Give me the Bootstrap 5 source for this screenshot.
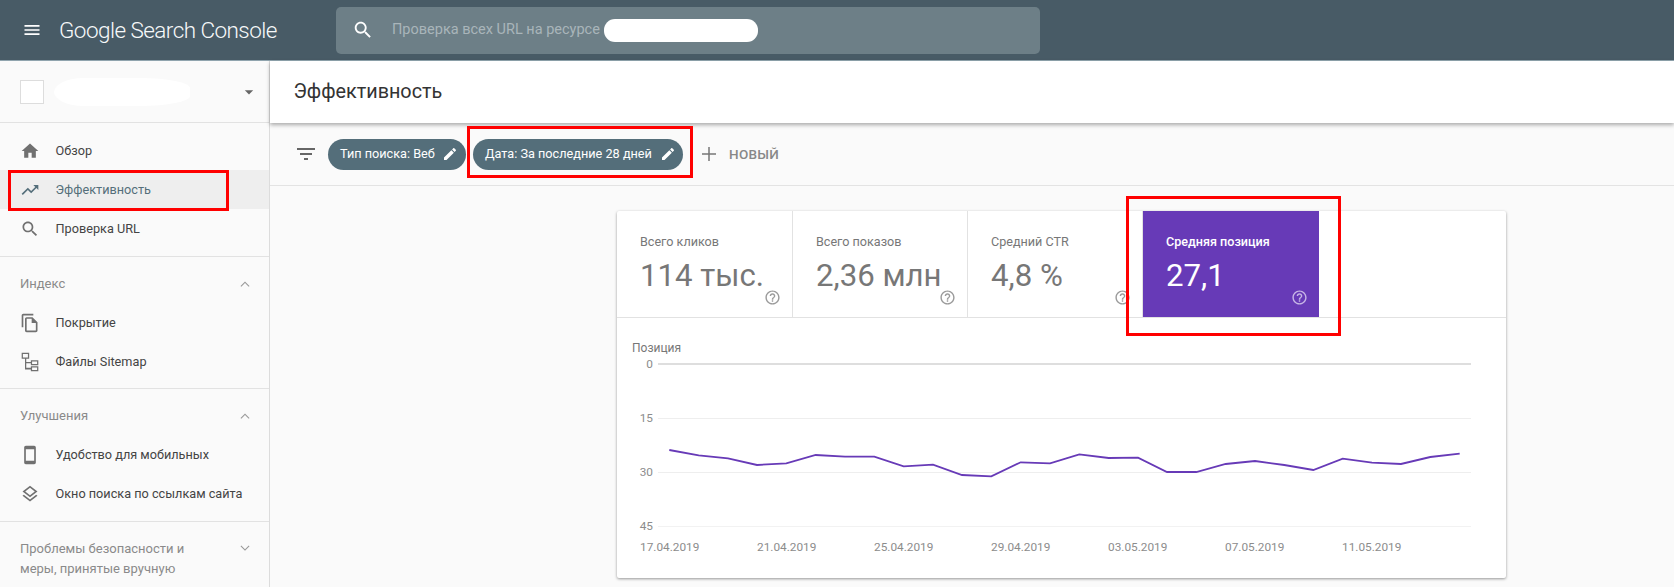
<!DOCTYPE html>
<html lang="ru">
<head>
<meta charset="utf-8">
<title>Google Search Console</title>
<link href="https://cdn.jsdelivr.net/npm/bootstrap@5.3.0/dist/css/bootstrap.min.css" rel="stylesheet">
<style>
html,body{height:587px;overflow:hidden;background:#fafafa;font-family:Roboto,"Liberation Sans",sans-serif;color:#444}
.gsc-root{position:relative;width:1674px;height:587px;overflow:hidden}
.gsc-top{height:61px;background:#485b66;border-bottom:1px solid #90a4ae;padding:0}
.gsc-burger{width:20px;height:20px;fill:#fff;margin-left:22px;flex:none}
.gsc-logo{font-size:22.5px;font-weight:300;color:#f7f9fa;letter-spacing:-.55px;margin-left:17px;width:277px;flex:none;line-height:1}
.gsc-search{width:704px;height:47px;background:#6d7f87;border-radius:5px;padding-left:16px;flex:none}
.gsc-search svg{width:22px;height:22px;fill:#fff;flex:none}
.gsc-search span{font-size:14.5px;color:#a9b5ba;margin-left:18px;width:212px;white-space:nowrap;flex:none}
.gsc-blot{width:154px;height:23px;background:#fff;border-radius:11px;flex:none}
.gsc-side{width:270px;height:526px;background:#fafafa;border-right:1px solid #dcdcdc;flex:none;overflow:hidden}
.gsc-prop{height:62px;border-bottom:1px solid #e2e2e2;padding-left:20px;padding-right:10px}
.gsc-square{width:24px;height:24px;background:#fff;border:1px solid #ddd;flex:none}
.gsc-prop-blot{width:136px;height:28px;background:#fff;border-radius:30px 50px 50px 30px/14px 10px 10px 14px;margin-left:10px;flex:none}
.gsc-drop{width:20px;height:20px;fill:#666;margin-left:auto;flex:none}
.gsc-group{padding-bottom:8px;border-bottom:1px solid #e2e2e2}
.gsc-group.gsc-first{padding-top:8px}
.gsc-group.gsc-tight{padding-bottom:7px}
.gsc-item{height:39px;color:#444;font-size:12.700px;font-weight:400;padding:0 0 0 20px;text-decoration:none;white-space:nowrap}
.gsc-item svg{width:20px;height:20px;fill:#707070;flex:none;margin-right:15.500px}
.gsc-item.gsc-on{background:#eee;color:#546e7a}
.gsc-item.gsc-on svg{fill:#546e7a}
.gsc-head{padding:18px 14px 10px 20px;font-size:13px;line-height:18px;color:#8a8a8a}
.gsc-head svg{width:18px;height:18px;fill:#999;flex:none;margin-right:1px}
.gsc-head.gsc-two{padding-top:17px;line-height:20px;align-items:flex-start!important}
.gsc-main{width:1404px;flex:none}
.gsc-title{height:62px;background:#fff;box-shadow:0 2px 4px rgba(0,0,0,.32);padding-left:23.500px;font-size:19.800px;font-weight:400;color:#333;position:relative}
.gsc-filters{height:63px;border-bottom:1px solid #e3e3e3;padding-left:24px}
.gsc-filter-ico{width:24px;height:24px;fill:#666;margin-right:10px;flex:none}
.gsc-chip{height:31px;border-radius:16px;background:#546e7a;color:#fff;font-size:12.700px;font-weight:400;padding:0 8px 0 12px;white-space:nowrap;flex:none;justify-content:space-between}
.gsc-chip svg{width:16px;height:16px;fill:#fff;flex:none}
.gsc-chip-a{width:138px;margin-right:7px}
.gsc-chip-b{width:210px;margin-right:14px;padding-right:7px}
.gsc-add{width:24px;height:24px;fill:#777;flex:none;margin-right:8px}
.gsc-new{font-size:13.500px;font-weight:500;color:#888;letter-spacing:.3px}
.gsc-card{width:889px;height:367px;background:#fff;margin:25px 0 0 347px;box-shadow:0 1px 3px rgba(0,0,0,.4);border-radius:2px}
.gsc-tiles{height:107px;border-bottom:1px solid #e2e2e2}
.gsc-tile{width:175px;height:106px;padding:22px 0 0 23px;border-right:1px solid #e2e2e2;position:relative;color:#777;flex:none}
.gsc-tile.gsc-wide{width:176px}
.gsc-tile.gsc-sel{background:#673ab7;color:#fff;border:0;width:176px}
.gsc-label{font-size:12.600px;line-height:18px;white-space:nowrap}
.gsc-sel .gsc-label{font-weight:500}
.gsc-value{font-size:31.200px;line-height:40px;margin-top:5px;white-space:nowrap}
.gsc-help{position:absolute;width:17px;height:17px;fill:#9a9a9a;right:11px;bottom:11px}
.gsc-sel .gsc-help{fill:#c8b6e6}
.gsc-chart{display:block}
.gsc-ax{font-family:Roboto,"Liberation Sans",sans-serif;font-size:11.800px;fill:#8c8c8c}
.gsc-cap{font-family:Roboto,"Liberation Sans",sans-serif;font-size:12px;fill:#777}
.gsc-mark{position:absolute;border:3px solid #f00;pointer-events:none}
.gsc-mark-a{left:8px;top:170px;width:221px;height:41px}
.gsc-mark-b{left:467px;top:126px;width:226px;height:52px}
.gsc-mark-c{left:1126px;top:196px;width:215px;height:140px}
</style>
</head>
<body>
<svg width="0" height="0" class="d-block position-absolute">
<defs>
<symbol id="i-menu" viewBox="0 0 24 24"><path d="M3 18h18v-2H3v2zm0-5h18v-2H3v2zm0-7v2h18V6H3z"/></symbol>
<symbol id="i-search" viewBox="0 0 24 24"><path d="M15.5 14h-.79l-.28-.27C15.41 12.59 16 11.11 16 9.5 16 5.91 13.09 3 9.5 3S3 5.91 3 9.5 5.91 16 9.5 16c1.61 0 3.09-.59 4.23-1.57l.27.28v.79l5 4.99L20.49 19l-4.99-5zm-6 0C7.01 14 5 11.99 5 9.5S7.01 5 9.5 5 14 7.01 14 9.5 11.99 14 9.5 14z"/></symbol>
<symbol id="i-home" viewBox="0 0 24 24"><path d="M10 20v-6h4v6h5v-8h3L12 3 2 12h3v8z"/></symbol>
<symbol id="i-trend" viewBox="0 0 24 24"><path d="M16 6l2.29 2.29-4.88 4.88-4-4L2 16.59 3.41 18l6-6 4 4 6.3-6.29L22 12V6z"/></symbol>
<symbol id="i-filter" viewBox="0 0 24 24"><path d="M10 18h4v-2h-4v2zM3 6v2h18V6H3zm3 7h12v-2H6v2z"/></symbol>
<symbol id="i-edit" viewBox="0 0 24 24"><path d="M3 17.25V21h3.75L17.81 9.94l-3.75-3.75L3 17.25zM20.71 7.04c.39-.39.39-1.02 0-1.41l-2.34-2.34c-.39-.39-1.02-.39-1.41 0l-1.83 1.83 3.75 3.75 1.83-1.83z"/></symbol>
<symbol id="i-add" viewBox="0 0 24 24"><path d="M19 12.75h-6.25V19h-1.5v-6.25H5v-1.5h6.25V5h1.5v6.25H19z"/></symbol>
<symbol id="i-less" viewBox="0 0 24 24"><path d="M12 8.5l-6 6 1 1 5-5 5 5 1-1z"/></symbol>
<symbol id="i-more" viewBox="0 0 24 24"><path d="M17 8.5l-5 5-5-5-1 1 6 6 6-6z"/></symbol>
<symbol id="i-drop" viewBox="0 0 24 24"><path d="M7 10l5 5 5-5z"/></symbol>
<symbol id="i-copy" viewBox="0 0 24 24"><path d="M16 1H4c-1.1 0-2 .9-2 2v14h2V3h12V1zm-1 4H8c-1.1 0-1.99.9-1.99 2L6 21c0 1.1.89 2 1.99 2H19c1.1 0 2-.9 2-2V11l-6-6zM8 21V7h6v5h5v9H8z"/></symbol>
<symbol id="i-map" viewBox="0 0 24 24"><path d="M2 1h9v7H7.5v4H13v-2h9v6h-9v-2.500H7.500v5.500H13v-2h9v6h-9v-2H6V8H2V1zm1.500 1.500v4h6v-4h-6zM14.500 11.500v3h6v-3h-6zm0 7v3h6v-3h-6z"/></symbol>
<symbol id="i-phone" viewBox="0 0 24 24"><path d="M17 1.010L7 1c-1.100 0-2 .9-2 2v18c0 1.100.9 2 2 2h10c1.100 0 2-.9 2-2V3c0-1.100-.9-1.990-2-1.990zM17 19H7V5h10v14z"/></symbol>
<symbol id="i-layers" viewBox="0 0 24 24"><path d="M11.990 18.540l-7.370-5.730L3 14.070l9 7 9-7-1.630-1.270-7.380 5.740zM12 16l7.360-5.730L21 9l-9-7-9 7 1.630 1.270L12 16zm0-11.470L17.740 9 12 13.470 6.260 9 12 4.530z"/></symbol>
<symbol id="i-help" viewBox="0 0 24 24"><path d="M11 18h2v-2h-2v2zm1-16C6.480 2 2 6.480 2 12s4.480 10 10 10 10-4.480 10-10S17.520 2 12 2zm0 18c-4.410 0-8-3.590-8-8s3.590-8 8-8 8 3.590 8 8-3.590 8-8 8zm0-14c-2.210 0-4 1.790-4 4h2c0-1.100.9-2 2-2s2 .9 2 2c0 2-3 1.750-3 5h2c0-2.250 3-2.500 3-5 0-2.210-1.790-4-4-4z"/></symbol>
</defs>
</svg>
<div class="gsc-root">
  <header class="navbar gsc-top flex-nowrap justify-content-start align-items-center">
    <svg class="gsc-burger"><use href="#i-menu"/></svg>
    <span class="gsc-logo">Google Search Console</span>
    <div class="gsc-search d-flex align-items-center">
      <svg><use href="#i-search"/></svg>
      <span>Проверка всех URL на ресурсе</span>
      <div class="gsc-blot"></div>
    </div>
  </header>
  <div class="d-flex">
    <aside class="gsc-side">
      <div class="gsc-prop d-flex align-items-center">
        <div class="gsc-square"></div>
        <div class="gsc-prop-blot"></div>
        <svg class="gsc-drop"><use href="#i-drop"/></svg>
      </div>
      <nav class="gsc-group gsc-first nav flex-column">
        <a class="gsc-item d-flex align-items-center" href="#"><svg><use href="#i-home"/></svg>Обзор</a>
        <a class="gsc-item gsc-on d-flex align-items-center" href="#"><svg><use href="#i-trend"/></svg>Эффективность</a>
        <a class="gsc-item d-flex align-items-center" href="#"><svg><use href="#i-search"/></svg>Проверка URL</a>
      </nav>
      <nav class="gsc-group gsc-tight nav flex-column">
        <div class="gsc-head d-flex justify-content-between align-items-center">Индекс<svg><use href="#i-less"/></svg></div>
        <a class="gsc-item d-flex align-items-center" href="#"><svg><use href="#i-copy"/></svg>Покрытие</a>
        <a class="gsc-item d-flex align-items-center" href="#"><svg><use href="#i-map"/></svg>Файлы Sitemap</a>
      </nav>
      <nav class="gsc-group nav flex-column">
        <div class="gsc-head d-flex justify-content-between align-items-center">Улучшения<svg><use href="#i-less"/></svg></div>
        <a class="gsc-item d-flex align-items-center" href="#"><svg><use href="#i-phone"/></svg>Удобство для мобильных</a>
        <a class="gsc-item d-flex align-items-center" href="#"><svg><use href="#i-layers"/></svg>Окно поиска по ссылкам сайта</a>
      </nav>
      <div class="gsc-head gsc-two d-flex justify-content-between">Проблемы безопасности и<br>меры, принятые вручную<svg><use href="#i-more"/></svg></div>
    </aside>
    <main class="gsc-main">
      <div class="gsc-title d-flex align-items-center">Эффективность</div>
      <div class="gsc-filters d-flex align-items-center">
        <svg class="gsc-filter-ico"><use href="#i-filter"/></svg>
        <div class="gsc-chip gsc-chip-a d-flex align-items-center">Тип поиска: Веб<svg><use href="#i-edit"/></svg></div>
        <div class="gsc-chip gsc-chip-b d-flex align-items-center">Дата: За последние 28 дней<svg><use href="#i-edit"/></svg></div>
        <svg class="gsc-add"><use href="#i-add"/></svg>
        <span class="gsc-new">НОВЫЙ</span>
      </div>
      <section class="gsc-card">
        <div class="gsc-tiles d-flex">
          <div class="gsc-tile gsc-wide"><div class="gsc-label">Всего кликов</div><div class="gsc-value">114 тыс.</div><svg class="gsc-help"><use href="#i-help"/></svg></div>
          <div class="gsc-tile"><div class="gsc-label">Всего показов</div><div class="gsc-value">2,36 млн</div><svg class="gsc-help"><use href="#i-help"/></svg></div>
          <div class="gsc-tile"><div class="gsc-label">Средний CTR</div><div class="gsc-value">4,8 %</div><svg class="gsc-help"><use href="#i-help"/></svg></div>
          <div class="gsc-tile gsc-sel"><div class="gsc-label">Средняя позиция</div><div class="gsc-value">27,1</div><svg class="gsc-help"><use href="#i-help"/></svg></div>
        </div>
        <svg class="gsc-chart" width="889" height="260" viewBox="617 318 889 260">
          <text class="gsc-cap" x="632" y="352">Позиция</text>
          <g class="gsc-ax" text-anchor="end">
            <text x="653" y="368">0</text><text x="653" y="422">15</text><text x="653" y="476">30</text><text x="653" y="530">45</text>
          </g>
          <line x1="658" x2="1471" y1="364" y2="364" stroke="#bdbdbd" stroke-width="1"/>
          <line x1="658" x2="1471" y1="418.500" y2="418.500" stroke="#eee"/>
          <line x1="658" x2="1471" y1="472.500" y2="472.500" stroke="#eee"/>
          <line x1="658" x2="1471" y1="526.500" y2="526.500" stroke="#f2f2f2"/>
          <polyline fill="none" stroke="#673ab7" stroke-width="1.800" points="669.300,450 698.700,455.300 728,458.300 757,465 786.300,463.300 815.700,455 845,456.700 874.300,456.700 903.700,466.300 933,464.700 962,475 991.300,476.300 1020.700,462.300 1050,463.300 1079.300,454.300 1108.700,458 1138,457.700 1167,472 1196.300,472 1225.700,464 1255,461 1284.300,465 1313.300,470 1342.700,458.700 1372,462.700 1401,464 1430.300,457 1459.700,453.700"/>
          <g class="gsc-ax" text-anchor="middle">
            <text x="669.700" y="551">17.04.2019</text><text x="786.700" y="551">21.04.2019</text><text x="903.700" y="551">25.04.2019</text><text x="1020.700" y="551">29.04.2019</text><text x="1137.700" y="551">03.05.2019</text><text x="1254.700" y="551">07.05.2019</text><text x="1371.700" y="551">11.05.2019</text>
          </g>
        </svg>
      </section>
    </main>
  </div>
  <div class="gsc-mark gsc-mark-a"></div>
  <div class="gsc-mark gsc-mark-b"></div>
  <div class="gsc-mark gsc-mark-c"></div>
</div>
<script src="https://cdn.jsdelivr.net/npm/bootstrap@5.3.0/dist/js/bootstrap.bundle.min.js"></script>
</body>
</html>
